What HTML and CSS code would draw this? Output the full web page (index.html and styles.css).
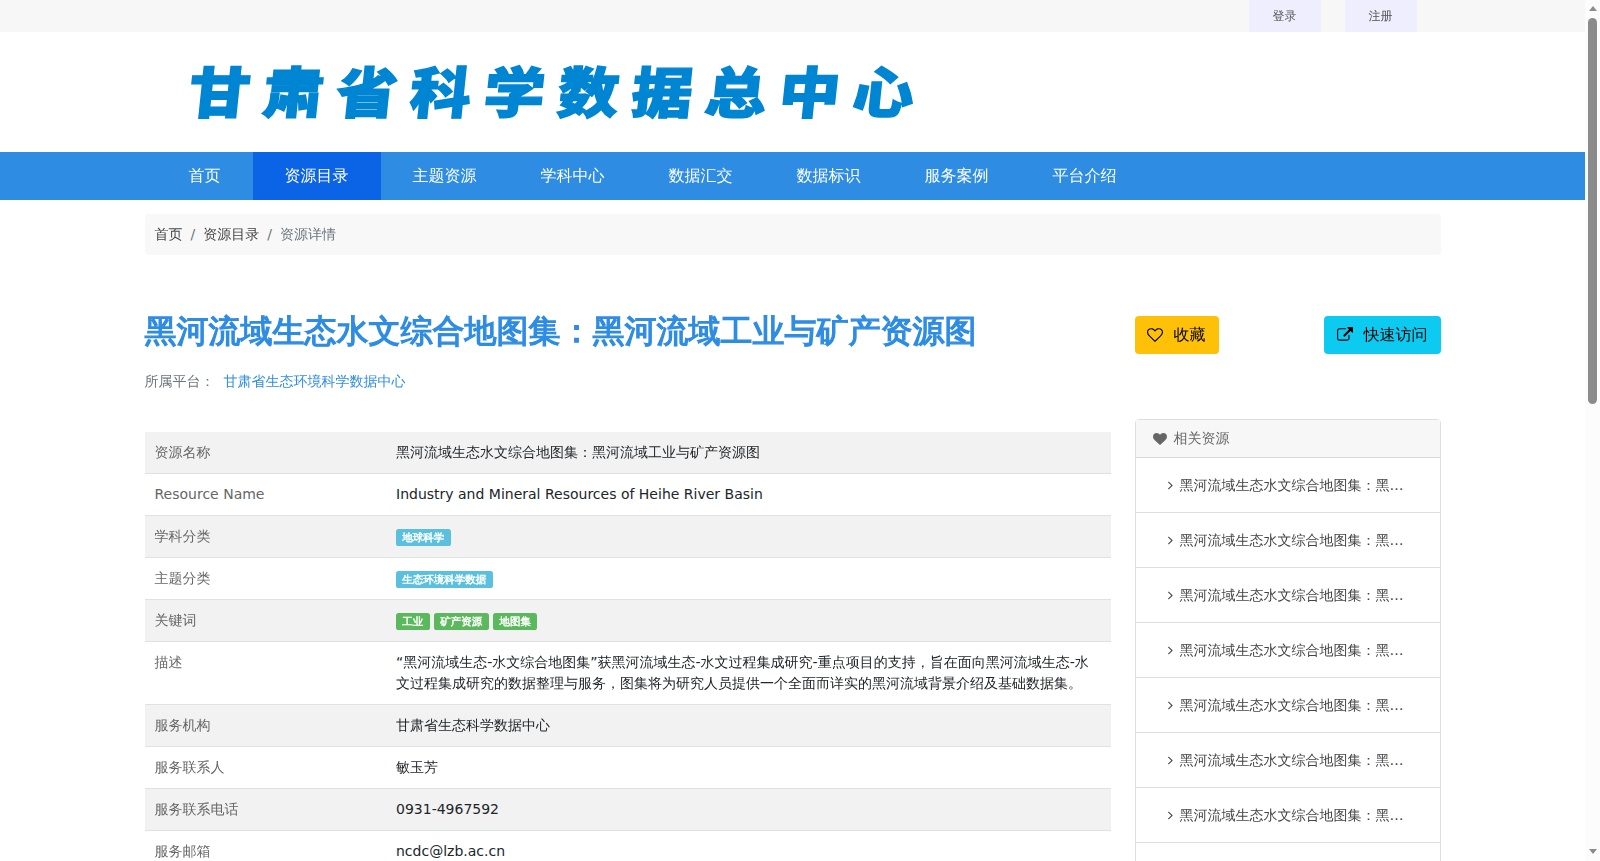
FILE: index.html
```html
<!DOCTYPE html>
<html lang="zh">
<head>
<meta charset="utf-8">
<title>甘肃省科学数据总中心</title>
<link rel="stylesheet" href="styles.css">
</head>
<body>
<svg class="sprite" aria-hidden="true">
  <symbol id="heart" viewBox="0 0 1792 1792"><path d="M896 1664q-26 0-44-18l-624-602q-10-8-27.500-26T145 952.500 77 855 23.500 734 0 596q0-220 127-344t351-124q62 0 126.500 21.500t120 58T820 276t76 68q36-36 76-68t95.500-68.500 120-58T1314 128q224 0 351 124t127 344q0 221-229 450l-623 600q-18 18-44 18z"/></symbol>
  <symbol id="heart-o" viewBox="0 0 1792 1792"><path d="M1664 596q0-81-21.500-143t-55-98.500-81.500-59.500-94-31-98-8-112 25.500-110.500 64-86.500 72-60 61.500q-18 22-49 22t-49-22q-24-28-60-61.500t-86.500-72-110.500-64-112-25.500-98 8-94 31-81.500 59.500-55 98.500-21.500 143q0 168 187 355l581 560 580-559q188-188 188-356zm128 0q0 221-229 450l-623 600q-18 18-44 18t-44-18l-624-602q-10-8-27.500-26T145 952.500 77 855 23.500 734 0 596q0-220 127-344t351-124q62 0 126.500 21.500t120 58T820 276t76 68q36-36 76-68t95.500-68.500 120-58T1314 128q224 0 351 124t127 344z"/></symbol>
  <symbol id="external" viewBox="0 0 1792 1792"><path d="M1408 928v320q0 119-84.500 203.500T1120 1536H288q-119 0-203.500-84.500T0 1248V416q0-119 84.500-203.500T288 128h704q14 0 23 9t9 23v64q0 14-9 23t-23 9H288q-66 0-113 47t-47 113v832q0 66 47 113t113 47h832q66 0 113-47t47-113V928q0-14 9-23t23-9h64q14 0 23 9t9 23zm384-864v512q0 26-19 45t-45 19-45-19l-176-176-652 652q-10 10-23 10t-23-10L695 983q-10-10-10-23t10-23l652-652-176-176q-19-19-19-45t19-45 45-19h512q26 0 45 19t19 45z"/></symbol>
  <symbol id="angle" viewBox="0 0 640 1792"><path d="M595 960q0 13-10 23l-466 466q-10 10-23 10t-23-10l-50-50q-10-10-10-23t10-23l393-393L23 567q-10-10-10-23t10-23l50-50q10-10 23-10t23 10l466 466q10 10 10 23z"/></symbol>
</svg>
<div class="page">
  <div class="topbar"><div class="container topbar-links"><a>登录</a><a>注册</a></div></div>
  <header class="header"><div class="container"><div class="logo">甘肃省科学数据总中心</div></div></header>
  <nav class="nav"><div class="container nav-items"><a>首页</a><a class="active">资源目录</a><a>主题资源</a><a>学科中心</a><a>数据汇交</a><a>数据标识</a><a>服务案例</a><a>平台介绍</a></div></nav>
  <main class="container">
    <div class="breadcrumb"><a>首页</a><span class="sep">/</span><a>资源目录</a><span class="sep">/</span><span>资源详情</span></div>
    <div class="columns">
      <section class="detail">
        <h2>黑河流域生态水文综合地图集：黑河流域工业与矿产资源图</h2>
        <p class="platform">所属平台：<a>甘肃省生态环境科学数据中心</a></p>
        <table>
          <tr><th>资源名称</th><td>黑河流域生态水文综合地图集：黑河流域工业与矿产资源图</td></tr>
          <tr><th>Resource Name</th><td>Industry and Mineral Resources of Heihe River Basin</td></tr>
          <tr><th>学科分类</th><td><span class="label info">地球科学</span></td></tr>
          <tr><th>主题分类</th><td><span class="label info">生态环境科学数据</span></td></tr>
          <tr><th>关键词</th><td><span class="label success">工业</span> <span class="label success">矿产资源</span> <span class="label success">地图集</span></td></tr>
          <tr><th>描述</th><td>“黑河流域生态-水文综合地图集”获黑河流域生态-水文过程集成研究-重点项目的支持，旨在面向黑河流域生态-水文过程集成研究的数据整理与服务，图集将为研究人员提供一个全面而详实的黑河流域背景介绍及基础数据集。</td></tr>
          <tr><th>服务机构</th><td>甘肃省生态科学数据中心</td></tr>
          <tr><th>服务联系人</th><td>敏玉芳</td></tr>
          <tr><th>服务联系电话</th><td>0931-4967592</td></tr>
          <tr><th>服务邮箱</th><td>ncdc@lzb.ac.cn</td></tr>
        </table>
      </section>
      <aside class="side">
        <div class="actions">
          <button class="btn warning"><svg class="icon"><use href="#heart-o"/></svg>收藏</button>
          <button class="btn cyan"><svg class="icon"><use href="#external"/></svg>快速访问</button>
        </div>
        <div class="card">
          <div class="card-header"><svg class="icon"><use href="#heart"/></svg>相关资源</div>
          <ul>
            <li><svg class="angle"><use href="#angle"/></svg>黑河流域生态水文综合地图集：黑…</li>
            <li><svg class="angle"><use href="#angle"/></svg>黑河流域生态水文综合地图集：黑…</li>
            <li><svg class="angle"><use href="#angle"/></svg>黑河流域生态水文综合地图集：黑…</li>
            <li><svg class="angle"><use href="#angle"/></svg>黑河流域生态水文综合地图集：黑…</li>
            <li><svg class="angle"><use href="#angle"/></svg>黑河流域生态水文综合地图集：黑…</li>
            <li><svg class="angle"><use href="#angle"/></svg>黑河流域生态水文综合地图集：黑…</li>
            <li><svg class="angle"><use href="#angle"/></svg>黑河流域生态水文综合地图集：黑…</li>
            <li></li>
          </ul>
        </div>
      </aside>
    </div>
  </main>
</div>
<div class="scrollbar"><i class="up"></i><i class="thumb"></i><i class="down"></i></div>
</body>
</html>
```
FILE: styles.css
```css
* { box-sizing: border-box; }
html, body { height: 861px; overflow: hidden; }
body {
  margin: 0;
  display: flex;
  background: #fff;
  color: #212529;
  font: 14px/1.5 "DejaVu Sans", "WenQuanYi Zen Hei", sans-serif;
}
.sprite { position: absolute; width: 0; height: 0; }
.page { width: 1585px; height: 861px; overflow: hidden; }
.container { width: 1320px; margin: 0 auto; padding: 0 12px; }
.topbar { height: 32px; background: #f7f7f7; }
.topbar-links { display: flex; justify-content: flex-end; gap: 24px; padding-right: 36px; }
.topbar-links a { width: 72px; height: 32px; background: #eef; color: #555; font-size: 12px; line-height: 32px; text-align: center; }
.header { height: 120px; }
.logo {
  width: max-content;
  padding: 14px 0 0 45px;
  color: #0085d3;
  font: 900 61px/88px "Noto Sans CJK SC", sans-serif;
  letter-spacing: 12.8px;
  -webkit-text-stroke: 1.5px #0085d3;
  transform: skewX(-6deg) scaleY(.9);
}
.nav { height: 48px; background: #2e8ce3; }
.nav-items { display: flex; padding-left: 24px; }
.nav a { padding: 0 32px; color: #fff; font-size: 16px; line-height: 48px; }
.nav .active { background: #0b63e5; }
.breadcrumb { display: flex; margin-top: 14px; padding: 10px; border-radius: 4px; background: #f8f8f8; color: #6c757d; }
.breadcrumb a { color: #444; }
.sep { padding: 0 8px; }
.columns { display: grid; grid-template-columns: 966px 306px; gap: 24px; }
h2 { margin: 57px 0 0; color: #2e8ce3; font-size: 32px; line-height: 38px; font-weight: 700; white-space: nowrap; -webkit-text-stroke: 1.3px; }
.platform { margin: 21px 0 40px; color: #6c757d; }
.platform a { margin-left: 9px; color: #2e8ce3; }
table { width: 966px; border-collapse: collapse; table-layout: fixed; }
tr { border-bottom: 1px solid #dee2e6; }
tr:nth-child(odd) { background: #f2f2f2; }
th, td { padding: 10px; text-align: left; vertical-align: top; font-weight: 400; }
th { width: 25%; color: #666; }
.label { display: inline; padding: .2em .6em .3em; border-radius: .25em; color: #fff; font-size: 75%; font-weight: 700; line-height: 1; vertical-align: baseline; -webkit-text-stroke: .45px; }
.info { background: #5bc0de; }
.success { background: #5cb85c; }
.icon { width: 16px; height: 16px; fill: currentColor; }
.actions { display: flex; justify-content: space-between; margin-top: 61px; }
.btn { display: flex; align-items: center; gap: 10px; height: 38px; padding: 0 13px; border: 0; border-radius: 4px; color: #000; font: inherit; font-size: 16px; }
.btn .icon { margin-left: -.5px; margin-right: .5px; }
.warning { background: #ffc107; }
.cyan { gap: 10.5px; background: #0dcaf0; }
.card { margin-top: 65px; border: 1px solid #dedede; border-radius: 4px; }
.card-header { display: flex; align-items: center; gap: 6.5px; height: 38px; padding: 0 17.5px; border-bottom: 1px solid #dadada; background: #f7f7f7; color: #666; }
.card-header .icon { width: 14px; height: 14px; }
ul { margin: 0; padding: 0; list-style: none; }
li { display: flex; align-items: center; height: 55px; padding-left: 32px; border-bottom: 1px solid #dedede; color: #444; }
.angle { width: 5px; height: 14px; margin-right: 7px; fill: currentColor; }
.scrollbar { display: flex; flex-direction: column; align-items: center; width: 15px; height: 861px; padding: 6px 0 7px; background: #fcfcfc; }
.up, .down { border: 4.5px solid transparent; }
.up { border-top: 0; border-bottom: 5px solid #8b8b8b; }
.down { margin-top: auto; border-bottom: 0; border-top: 5px solid #8b8b8b; }
.thumb { width: 9px; height: 386px; margin-top: 7px; border-radius: 5px; background: #8b8b8b; }
```
